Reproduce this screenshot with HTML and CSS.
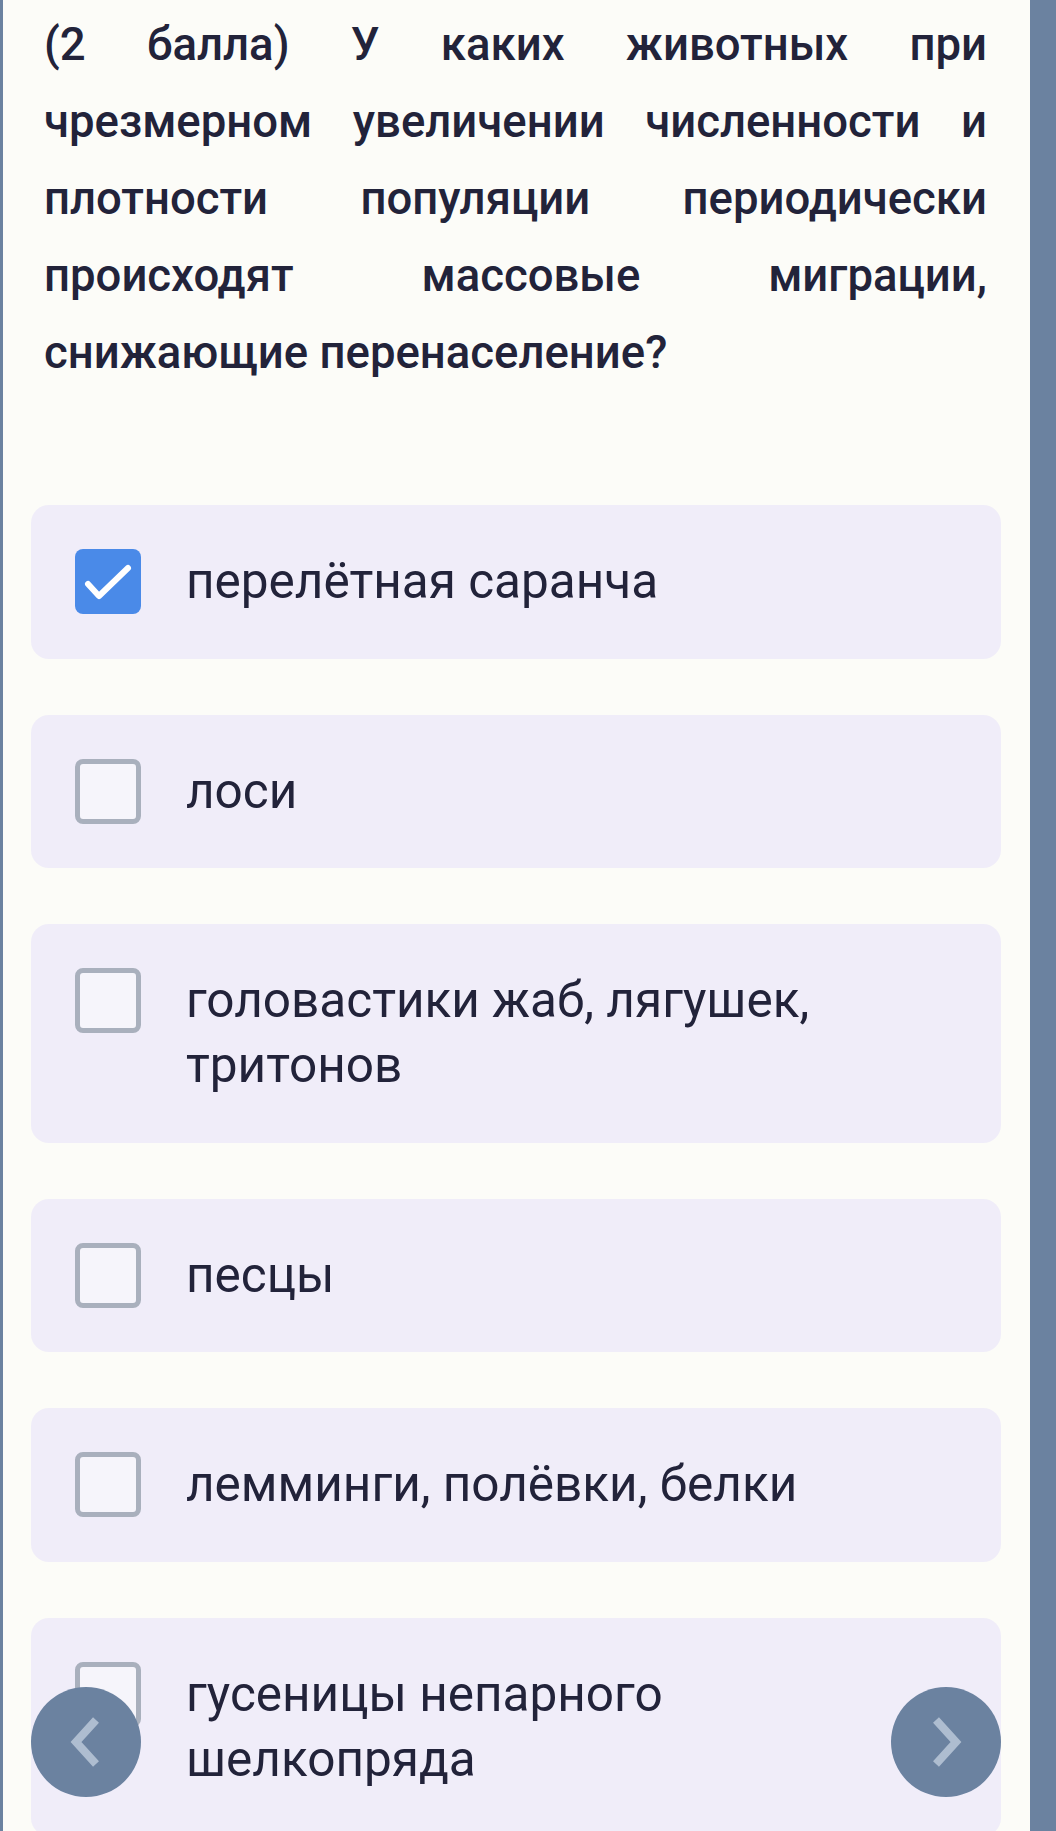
FILE: index.html
```html
<!DOCTYPE html>
<html lang="ru">
<head>
    <meta charset="UTF-8">
    <title>Тест</title>
    <link rel="stylesheet" href="styles.css">
</head>
<body>

<div class="panel">
    <p class="question">(2 балла) У каких животных при чрезмерном увеличении численности и плотности популяции периодически происходят массовые миграции, снижающие перенаселение?</p>

    <div class="options">
        <label class="option">
            <span class="box checked">
                <svg viewBox="0 0 66 66" width="66" height="66"><path d="M13 35 L24 47 L53 19" fill="none" stroke="#fff" stroke-width="6" stroke-linecap="round" stroke-linejoin="round"/></svg>
            </span>
            <span class="label">перелётная саранча</span>
        </label>
        <label class="option">
            <span class="box"></span>
            <span class="label">лоси</span>
        </label>
        <label class="option">
            <span class="box"></span>
            <span class="label">головастики жаб, лягушек,<br>тритонов</span>
        </label>
        <label class="option">
            <span class="box"></span>
            <span class="label">песцы</span>
        </label>
        <label class="option">
            <span class="box"></span>
            <span class="label">лемминги, полёвки, белки</span>
        </label>
        <label class="option">
            <span class="box"></span>
            <span class="label">гусеницы непарного<br>шелкопряда</span>
        </label>
    </div>
</div>

<button class="nav prev">
    <svg viewBox="0 0 40 60" width="40" height="60"><path d="M30 8 L10 30 L30 52" fill="none" stroke="#aebdd0" stroke-width="8"/></svg>
</button>
<button class="nav next">
    <svg viewBox="0 0 40 60" width="40" height="60"><path d="M10 8 L30 30 L10 52" fill="none" stroke="#aebdd0" stroke-width="8"/></svg>
</button>

</body>
</html>
```

FILE: styles.css
```css
body {
    margin: 0;
    background: #6b82a0;
    font-family: Roboto, "Noto Sans", sans-serif;
    color: #22233a;
    overflow: hidden;
}
.panel {
    margin-left: 3px;
    width: 1027px;
    min-height: 1831px;
    background: #fcfcf8;
    padding-top: 6px;
}
.question {
    margin: 0 43px 114px 41px;
    font-size: 45.5px;
    font-weight: 500;
    line-height: 77px;
    text-align: justify;
}
.options {
    display: flex;
    flex-direction: column;
    gap: 56px;
    margin: 0 29px 0 28px;
}
.option {
    display: flex;
    align-items: flex-start;
    gap: 45px;
    background: #f0edf9;
    border-radius: 18px;
    padding: 44px 44px 44.5px;
}
.box {
    flex: none;
    box-sizing: border-box;
    width: 66px;
    height: 65px;
    border: 5px solid #a9b0bd;
    border-radius: 8px;
    background: #f6f5fb;
}
.box.checked {
    border: none;
    background: #4a8ae8;
}
.box svg {
    display: block;
}
.label {
    font-size: 49.5px;
    line-height: 65px;
}
.nav {
    position: fixed;
    top: 1687px;
    width: 110px;
    height: 110px;
    border: none;
    border-radius: 50%;
    background: #6b82a0;
    display: flex;
    align-items: center;
    justify-content: center;
    padding: 0;
}
.prev {
    left: 31px;
}
.next {
    left: 891px;
}
```
